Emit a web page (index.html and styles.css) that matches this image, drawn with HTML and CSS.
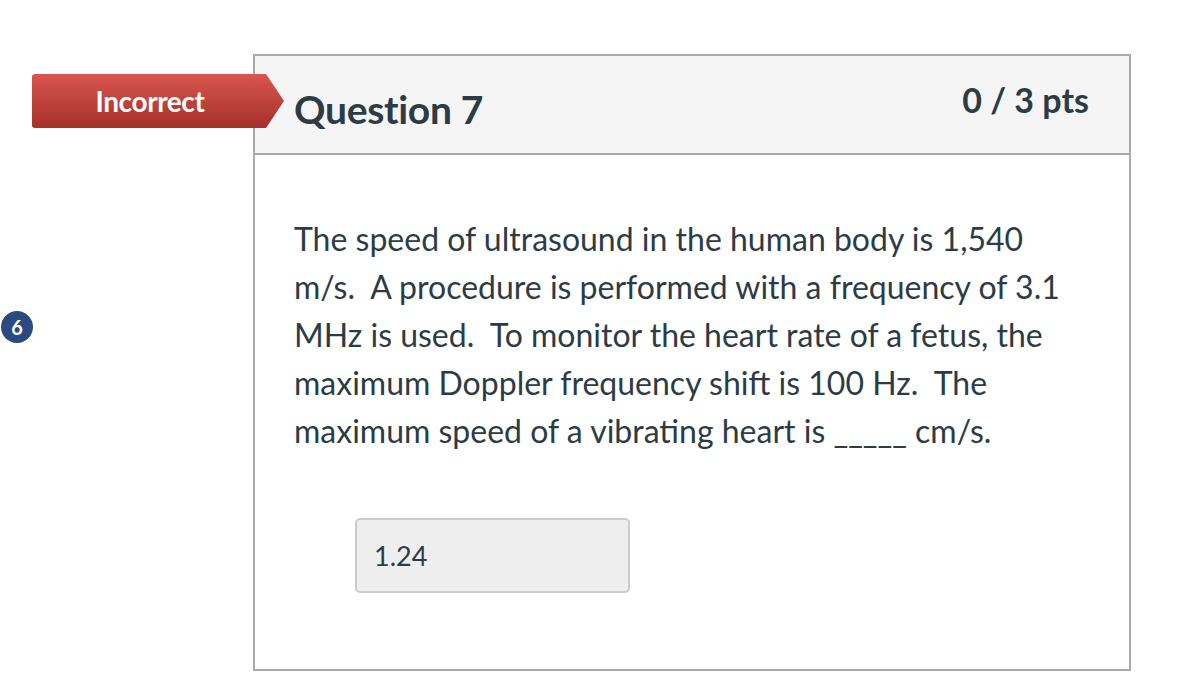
FILE: index.html
```html
<!DOCTYPE html>
<html>
<head>
<meta charset="utf-8">
<link rel="stylesheet" href="styles.css">
</head>
<body>
<div class="page">
  <div class="gutter">
    <span class="qnum">6</span>
  </div>
  <div class="card">
    <div class="badge">
      <svg class="badge-shape" width="252" height="54" viewBox="0 0 252 54">
        <defs>
          <linearGradient id="rg" x1="0" y1="0" x2="0" y2="1">
            <stop offset="0" stop-color="#d9564f"/>
            <stop offset="1" stop-color="#a5302a"/>
          </linearGradient>
        </defs>
        <path d="M3 0 H234 L252 27 L234 54 H3 Q0 54 0 51 V3 Q0 0 3 0 Z" fill="url(#rg)"/>
      </svg>
      <span class="badge-text">Incorrect</span>
    </div>
    <div class="header">
      <h2 class="title">Question 7</h2>
      <span class="pts">0 / 3 pts</span>
    </div>
    <div class="content">
      <p class="text">The speed of ultrasound in the human body is 1,540 m/s.&nbsp; A procedure is performed with a frequency of 3.1 MHz is used.&nbsp; To monitor the heart rate of a fetus, the maximum Doppler frequency shift is 100 Hz.&nbsp; The maximum speed of a vibrating heart is _____ cm/s.</p>
      <div class="answer">1.24</div>
    </div>
  </div>
</div>
</body>
</html>
```
FILE: styles.css
```css
html, body {
  margin: 0;
  padding: 0;
  background: #fff;
}
body {
  font-family: Lato, "Open Sans", sans-serif;
  color: #2d3b45;
}
.page {
  display: flex;
  padding-top: 54px;
}
.gutter {
  width: 253px;
  flex: none;
  padding-top: 257px;
}
.qnum {
  display: flex;
  align-items: center;
  justify-content: center;
  width: 32px;
  height: 32px;
  margin-left: 1px;
  border-radius: 50%;
  background: #2b4a80;
  color: #fff;
  font-size: 20px;
  font-weight: 700;
}
.card {
  position: relative;
  width: 874px;
  height: 613px;
  border: 2px solid #aaaaaa;
  flex: none;
}
.badge {
  position: absolute;
  left: -223px;
  top: 18px;
  width: 252px;
  height: 54px;
}
.badge-shape {
  position: absolute;
  left: 0;
  top: 0;
}
.badge-text {
  position: relative;
  display: block;
  width: 236px;
  text-align: center;
  line-height: 54px;
  color: #fff;
  font-size: 28px;
  font-weight: 700;
  letter-spacing: -0.4px;
}
.header {
  display: flex;
  justify-content: space-between;
  align-items: flex-start;
  height: 99px;
  box-sizing: border-box;
  padding: 0 40px 0 39px;
  background: #f5f5f5;
  border-bottom: 2px solid #aaaaaa;
}
.title {
  margin: 26px 0 0;
  font-size: 39px;
  font-weight: 700;
  line-height: 54px;
  letter-spacing: -0.3px;
}
.pts {
  margin-top: 20px;
  font-size: 34px;
  font-weight: 700;
  line-height: 48px;
  color: #2d3b45;
}
.content {
  padding: 60px 40px 0 39px;
}
.text {
  margin: 0;
  width: 780px;
  font-size: 32px;
  line-height: 48px;
}
.answer {
  margin: 63px 0 0 61px;
  width: 275px;
  height: 75px;
  box-sizing: border-box;
  padding-left: 17px;
  display: flex;
  align-items: center;
  background: #eeeeee;
  border: 2px solid #cccccc;
  border-radius: 5px;
  font-size: 27px;
}
```
